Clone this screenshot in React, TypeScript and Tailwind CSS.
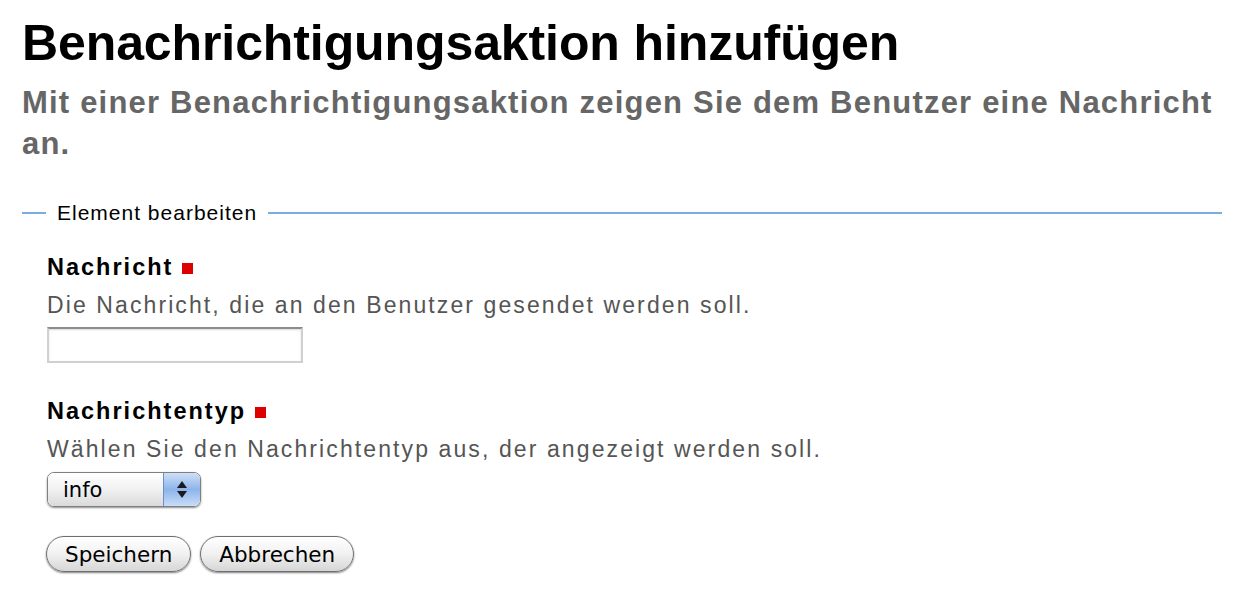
const sans = "font-['Helvetica','Liberation_Sans','Arial',sans-serif]";
const aqua = "font-['Lucida_Grande','DejaVu_Sans',sans-serif]";

function Required() {
  return <span className="inline-block w-[11px] h-[11px] bg-[#dd0000] ml-[9px] align-[1px]" />;
}

function Field({
  label,
  help,
  children,
  className = "",
}: {
  label: string;
  help: string;
  children: React.ReactNode;
  className?: string;
}) {
  return (
    <div className={`flex flex-col ${className}`}>
      <label className="text-[23.5px] font-bold text-black leading-[26px] tracking-[2px]">
        {label}
        <Required />
      </label>
      <p className="mt-[10px] text-[23px] text-[#555] leading-[30px] tracking-[2.1px]">{help}</p>
      {children}
    </div>
  );
}

function AquaButton({ children }: { children: React.ReactNode }) {
  return (
    <button
      className={`h-[36px] px-[18px] pt-[2px] rounded-full border border-[#6f6f6f] bg-gradient-to-b from-white via-[#f1f1f1] to-[#d6d6d6] shadow-[0_1px_2px_rgba(0,0,0,0.5)] text-[21.5px] text-black leading-none ${aqua}`}
    >
      {children}
    </button>
  );
}

export default function App() {
  return (
    <div className={`min-h-screen bg-white pl-[22px] pr-[26px] pt-[15px] ${sans}`}>
      <h1 className="text-[50px] font-bold text-black leading-[56px] tracking-[-0.1px]">
        Benachrichtigungsaktion hinzufügen
      </h1>
      <p className="mt-[11px] text-[31px] font-bold text-[#666] leading-[41px] tracking-[1.2px]">
        Mit einer Benachrichtigungsaktion zeigen Sie dem Benutzer eine Nachricht an.
      </p>

      <div className="mt-[37px] flex items-center h-[24px]">
        <div className="w-[24px] h-[2px] bg-[#7aaee0]" />
        <span className="px-[11px] text-[21px] text-black leading-[24px] tracking-[1px]">
          Element bearbeiten
        </span>
        <div className="flex-1 h-[2px] bg-[#7aaee0]" />
      </div>

      <div className="pl-[25px]">
        <Field
          className="mt-[29px]"
          label="Nachricht"
          help="Die Nachricht, die an den Benutzer gesendet werden soll."
        >
          <input
            type="text"
            className="mt-[7px] w-[256px] h-[36px] border-2 border-[#d0d0d0] border-t-[#8c8c8c] shadow-[inset_0_1px_2px_rgba(0,0,0,0.15)] bg-white outline-none"
          />
        </Field>

        <Field
          className="mt-[35px]"
          label="Nachrichtentyp"
          help="Wählen Sie den Nachrichtentyp aus, der angezeigt werden soll."
        >
          <div
            className={`mt-[8px] flex w-[154px] h-[35px] rounded-[7px] border border-[#7f7f7f] overflow-hidden shadow-[0_1px_2px_rgba(0,0,0,0.45)] ${aqua}`}
          >
            <div className="flex-1 flex items-center pl-[15px] pt-[2px] bg-gradient-to-b from-white via-[#f1f1f1] to-[#dadada] text-[21px] text-black">
              info
            </div>
            <div className="w-[37px] flex flex-col items-center justify-center gap-[3px] border-l border-[#6b8fc9] bg-gradient-to-b from-[#cfe0f7] via-[#8db4ea] to-[#c8ddf8]">
              <svg width="10" height="7" viewBox="0 0 10 7">
                <path d="M5 0 L10 7 L0 7 Z" fill="#1a1a1a" />
              </svg>
              <svg width="10" height="7" viewBox="0 0 10 7">
                <path d="M0 0 L10 0 L5 7 Z" fill="#1a1a1a" />
              </svg>
            </div>
          </div>
        </Field>

        <div className="mt-[29px] flex gap-[9px] -ml-[1px]">
          <AquaButton>Speichern</AquaButton>
          <AquaButton>Abbrechen</AquaButton>
        </div>
      </div>
    </div>
  );
}
